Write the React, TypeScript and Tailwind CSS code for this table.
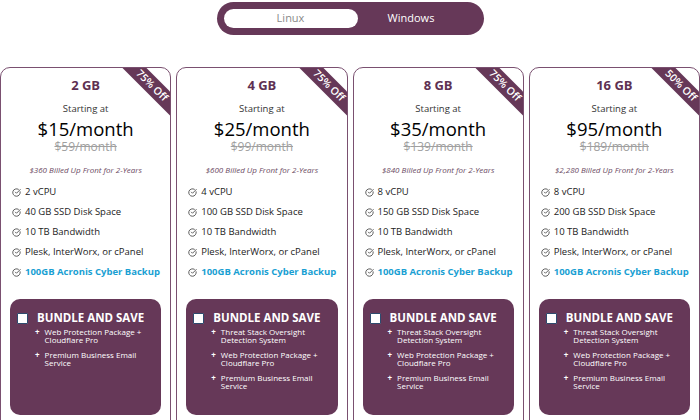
import { CircleCheckBig } from "lucide-react";

type Plan = {
  size: string;
  off: string;
  price: number;
  was: number;
  billed: string;
  cpu: string;
  disk: string;
  bundle: string[];
};

const plans: Plan[] = [
  {
    size: "2 GB",
    off: "75% Off",
    price: 15,
    was: 59,
    billed: "$360",
    cpu: "2 vCPU",
    disk: "40 GB SSD Disk Space",
    bundle: ["Web Protection Package + Cloudflare Pro", "Premium Business Email Service"],
  },
  {
    size: "4 GB",
    off: "75% Off",
    price: 25,
    was: 99,
    billed: "$600",
    cpu: "4 vCPU",
    disk: "100 GB SSD Disk Space",
    bundle: [
      "Threat Stack Oversight Detection System",
      "Web Protection Package + Cloudflare Pro",
      "Premium Business Email Service",
    ],
  },
  {
    size: "8 GB",
    off: "75% Off",
    price: 35,
    was: 139,
    billed: "$840",
    cpu: "8 vCPU",
    disk: "150 GB SSD Disk Space",
    bundle: [
      "Threat Stack Oversight Detection System",
      "Web Protection Package + Cloudflare Pro",
      "Premium Business Email Service",
    ],
  },
  {
    size: "16 GB",
    off: "50% Off",
    price: 95,
    was: 189,
    billed: "$2,280",
    cpu: "8 vCPU",
    disk: "200 GB SSD Disk Space",
    bundle: [
      "Threat Stack Oversight Detection System",
      "Web Protection Package + Cloudflare Pro",
      "Premium Business Email Service",
    ],
  },
];

function Feature({ text, accent = false }: { text: string; accent?: boolean }) {
  return (
    <li className="h-[20px] flex items-center gap-[4px]">
      <CircleCheckBig className="w-[9px] h-[9px] text-[#555] shrink-0" strokeWidth={2.5} />
      <span
        className={
          accent
            ? "text-[9.5px] font-bold text-[#1a9fd3]"
            : "text-[9.5px] text-[#222]"
        }
      >
        {text}
      </span>
    </li>
  );
}

function PlanCard({ plan }: { plan: Plan }) {
  return (
    <div className="relative h-[370px] border border-[#7a5070] rounded-t-[10px] overflow-hidden px-[9px] pt-[9px] flex flex-col">
      <div className="absolute top-[9px] right-[-32px] w-[100px] h-[17px] rotate-45 bg-[#663858] text-white text-[10.5px] font-semibold flex items-center justify-center">
        {plan.off}
      </div>

      <div className="h-[16px] leading-[16px] text-center text-[13px] font-bold text-[#5e3052]">
        {plan.size}
      </div>
      <div className="mt-[9px] h-[14px] leading-[14px] text-center text-[9.5px] text-[#333]">
        Starting at
      </div>
      <div className="mt-[4px] h-[18px] leading-[18px] text-center text-[18.5px] text-black">
        ${plan.price}/month
      </div>
      <div className="mt-[3px] h-[12px] leading-[12px] text-center text-[12px] text-[#a0a0a0] line-through">
        ${plan.was}/month
      </div>
      <div className="mt-[11px] h-[12px] leading-[12px] text-center text-[8px] italic text-[#6b4a63]">
        {plan.billed} Billed Up Front for 2-Years
      </div>

      <ul className="mt-[6px] pl-[2px]">
        <Feature text={plan.cpu} />
        <Feature text={plan.disk} />
        <Feature text="10 TB Bandwidth" />
        <Feature text="Plesk, InterWorx, or cPanel" />
        <Feature text="100GB Acronis Cyber Backup" accent />
      </ul>

      <div className="mt-[17px] h-[116px] rounded-[10px] bg-[#663858] pt-[12px] pl-[7px] pr-[8px]">
        <div className="flex items-center gap-[9px] h-[14px]">
          <span className="w-[11px] h-[11px] bg-white border border-[#2d4b6e] rounded-[1px]" />
          <span className="text-[11.5px] font-bold text-white">BUNDLE AND SAVE</span>
        </div>
        <ul className="mt-[3px] flex flex-col gap-[7px] pl-[18px]">
          {plan.bundle.map((b) => (
            <li key={b} className="flex gap-[5px] text-[8px] leading-[8px] text-white">
              <span className="font-bold">+</span>
              <span className="w-[102px]">{b}</span>
            </li>
          ))}
        </ul>
      </div>
    </div>
  );
}

export default function App() {
  return (
    <div className="w-[700px] h-[420px] overflow-hidden bg-white font-['Open_Sans',sans-serif]">
      <div className="flex justify-center pt-[2px]">
        <div className="w-[267px] h-[33px] rounded-full bg-[#663858] p-[7px] flex">
          <div className="w-[134px] rounded-full bg-white flex items-center justify-center text-[11px] text-[#8a8a8a]">
            Linux
          </div>
          <div className="flex-1 flex items-center justify-center pr-[12px] text-[11px] text-white">
            Windows
          </div>
        </div>
      </div>

      <div className="grid grid-cols-4 gap-[5px] mt-[32px]">
        {plans.map((p) => (
          <PlanCard key={p.size} plan={p} />
        ))}
      </div>
    </div>
  );
}
